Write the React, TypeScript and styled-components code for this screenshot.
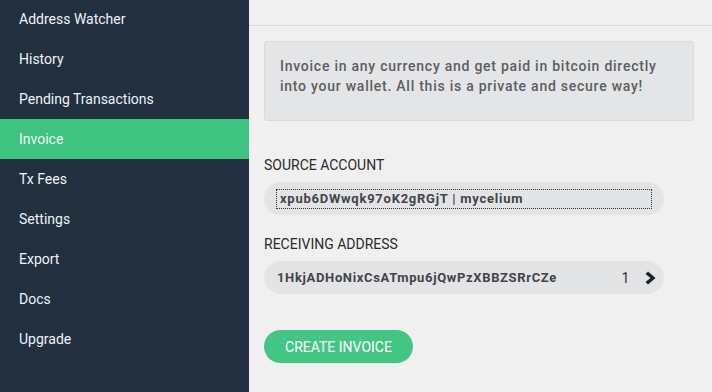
import styled, { createGlobalStyle } from 'styled-components';

const Global = createGlobalStyle`
  html, body {
    margin: 0;
    padding: 0;
    background: #f0f0f0;
    font-family: Roboto, "Liberation Sans", sans-serif;
  }
  * { box-sizing: border-box; }
`;

const Layout = styled.div`
  display: flex;
  height: 392px;
  overflow: hidden;
`;

const Sidebar = styled.nav`
  width: 249px;
  flex-shrink: 0;
  background-color: #212f3f;
  display: flex;
  flex-direction: column;
  margin-top: -1px;
`;

const NavItem = styled.div<{ $active?: boolean }>`
  height: 40px;
  display: flex;
  align-items: center;
  padding-left: 19px;
  font-size: 14px;
  color: #eef3f8;
  background-color: ${props => props.$active ? '#3ec381' : 'transparent'};
`;

const Main = styled.main`
  flex: 1;
  display: flex;
  flex-direction: column;
`;

const TopBar = styled.div`
  height: 26px;
  border-bottom: 1px solid #d9d9d9;
`;

const Content = styled.div`
  padding: 15px 18px 0 15px;
  display: flex;
  flex-direction: column;
`;

const InfoBox = styled.div`
  background-color: #e4e5e7;
  border: 1px solid #d9dadc;
  border-radius: 3px;
  padding: 14px 22px 0 15px;
  height: 80px;
  font-size: 14px;
  font-weight: 500;
  line-height: 20px;
  letter-spacing: 0.75px;
  color: #5d5d62;
`;

const Label = styled.div<{ $top: number }>`
  margin-top: ${props => props.$top}px;
  font-size: 14px;
  color: #2b2b2b;
  line-height: 16px;
`;

const Pill = styled.div`
  margin-top: 9px;
  width: 400px;
  height: 33px;
  border-radius: 17px;
  background-color: #e3e4e6;
  display: flex;
  align-items: center;
  padding: 0 8px 0 12px;
  font-size: 13px;
  font-weight: 700;
  color: #434349;
  letter-spacing: 0.75px;
`;

const Focused = styled.span`
  flex: 1;
  margin-right: 4px;
  border: 1px dotted #333;
  padding: 2px 3px 2px 3px;
  line-height: 14px;
`;

const Address = styled.span`
  flex: 1;
  padding-left: 1px;
  letter-spacing: 0.65px;
`;

const Count = styled.span`
  font-weight: 400;
  font-size: 14px;
  color: #333;
  margin-right: 15px;
`;

const Button = styled.button`
  margin-top: 36px;
  width: 149px;
  height: 33px;
  border: none;
  border-radius: 17px;
  background-color: #43c583;
  color: #fff;
  font-family: inherit;
  font-size: 14px;
  text-transform: uppercase;
  cursor: pointer;
  padding: 0;
`;

const items = [
  'Address Watcher',
  'History',
  'Pending Transactions',
  'Invoice',
  'Tx Fees',
  'Settings',
  'Export',
  'Docs',
  'Upgrade',
];

const Chevron = () => (
  <svg width="11" height="14" viewBox="0 0 11 14">
    <path d="M3 0.5 L10.5 7 L3 13.5 L0.5 11 L5.5 7 L0.5 3 Z" fill="#1c222c" />
  </svg>
);

export default function App() {
  return (
    <>
      <Global />
      <Layout>
        <Sidebar>
          {items.map(name => (
            <NavItem key={name} $active={name === 'Invoice'}>{name}</NavItem>
          ))}
        </Sidebar>
        <Main>
          <TopBar />
          <Content>
            <InfoBox>
              Invoice in any currency and get paid in bitcoin directly into your wallet. All this is a private and secure way!
            </InfoBox>
            <Label $top={36}>SOURCE ACCOUNT</Label>
            <Pill>
              <Focused>xpub6DWwqk97oK2gRGjT | mycelium</Focused>
            </Pill>
            <Label $top={21}>RECEIVING ADDRESS</Label>
            <Pill>
              <Address>1HkjADHoNixCsATmpu6jQwPzXBBZSRrCZe</Address>
              <Count>1</Count>
              <Chevron />
            </Pill>
            <Button>Create Invoice</Button>
          </Content>
        </Main>
      </Layout>
    </>
  );
}
